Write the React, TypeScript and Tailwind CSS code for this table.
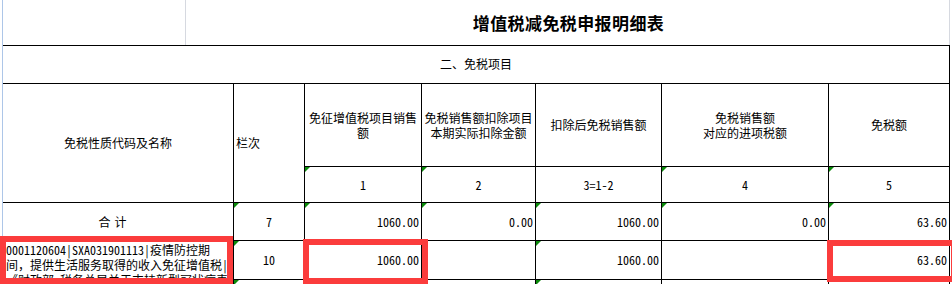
import React from "react";

const CJK = "font-['Noto_Sans_CJK_SC','Noto_Sans',sans-serif]";
const MONO = "font-['Noto_Sans_Mono_CJK_SC','Liberation_Mono','Noto_Sans_CJK_SC',monospace]";

// small green "number stored as text" marker in the cell corner
function Tick() {
  return (
    <span className="absolute left-0 top-0 h-0 w-0 border-t-[5px] border-r-[5px] border-t-[#0a8a0a] border-r-transparent" />
  );
}

function Cell({
  children,
  className = "",
  tick = false,
}: {
  children?: React.ReactNode;
  className?: string;
  tick?: boolean;
}) {
  return (
    <div className={`relative border-r border-b border-black ${className}`}>
      {tick && <Tick />}
      {children}
    </div>
  );
}

const num = `flex items-center justify-end pr-[2px] text-[12px] ${MONO}`;
const mid = `flex items-center justify-center text-[12px] ${MONO}`;

export default function App() {
  return (
    <div className="relative flex h-[284px] w-[952px] overflow-hidden bg-white text-black">
      <div className="w-[2px]" />
      <div className="w-px bg-[#adc6e8]" />

      <div className="w-[947px]">
        {/* title row */}
        <div className="flex h-[46px] border-b border-black">
          <div className="w-[183px] border-r border-[#d6d9e0]" />
          <div
            className={`flex flex-1 items-center justify-center border-r border-[#d6d9e0] pl-[2px] text-[17px] font-bold tracking-[0.4px] ${CJK}`}
          >
            增值税减免税申报明细表
          </div>
        </div>

        {/* section row */}
        <div
          className={`flex h-[38px] items-center justify-center border-r border-b border-black pb-[2px] text-[12px] ${CJK}`}
        >
          二、免税项目
        </div>

        <div className="grid grid-cols-[231px_71px_117px_114px_126px_167px_121px] grid-rows-[83px_36px_38px_39px_12px]">
          {/* header */}
          <Cell className={`row-span-2 flex items-center justify-center text-[12px] ${CJK}`}>
            免税性质代码及名称
          </Cell>
          <Cell className={`row-span-2 flex items-center pl-[2px] text-[12px] ${CJK}`}>栏次</Cell>
          <Cell className={`flex items-center justify-center text-center text-[12px] leading-[15px] ${CJK}`}>
            <span>
              免征增值税项目销售
              <br />额
            </span>
          </Cell>
          <Cell className={`flex items-center justify-center text-center text-[12px] leading-[15px] ${CJK}`}>
            <span>
              免税销售额扣除项目
              <br />
              本期实际扣除金额
            </span>
          </Cell>
          <Cell className={`flex items-center justify-center text-[12px] ${CJK}`}>扣除后免税销售额</Cell>
          <Cell className={`flex items-center justify-center text-center text-[12px] leading-[15px] ${CJK}`}>
            <span>
              免税销售额
              <br />
              对应的进项税额
            </span>
          </Cell>
          <Cell className={`flex items-center justify-center text-[12px] ${CJK}`}>免税额</Cell>

          {/* column numbers */}
          <Cell tick className={mid}>1</Cell>
          <Cell tick className={mid}>2</Cell>
          <Cell className={mid}>3=1-2</Cell>
          <Cell tick className={mid}>4</Cell>
          <Cell tick className={mid}>5</Cell>

          {/* total */}
          <Cell className={`flex items-center justify-center gap-[4px] pr-[11px] text-[12px] ${CJK}`}>
            <span>合</span>
            <span>计</span>
          </Cell>
          <Cell tick className={mid}>7</Cell>
          <Cell tick className={num}>1060.00</Cell>
          <Cell tick className={num}>0.00</Cell>
          <Cell tick className={num}>1060.00</Cell>
          <Cell tick className={num}>0.00</Cell>
          <Cell tick className={num}>63.60</Cell>

          {/* line 10 */}
          <Cell className={`overflow-hidden pl-[3px] pt-px text-[12px] leading-[15px] whitespace-nowrap ${MONO}`}>
            <div>0001120604|SXA031901113|疫情防控期</div>
            <div>间，提供生活服务取得的收入免征增值税|</div>
            <div>《财政部 税务总局关于支持新型冠状病毒感染</div>
          </Cell>
          <Cell tick className={mid}>10</Cell>
          <Cell tick className={num}>1060.00</Cell>
          <Cell className={num} />
          <Cell tick className={num}>1060.00</Cell>
          <Cell className={num} />
          <Cell className={num}>63.60</Cell>

          {/* next line, cut off */}
          <Cell />
          <Cell tick />
          <Cell />
          <Cell />
          <Cell tick />
          <Cell />
          <Cell />
        </div>
      </div>

      {/* red highlight boxes drawn over the sheet */}
      <div className="pointer-events-none absolute left-0 top-[236px] h-[48px] w-[233px] border-[6px] border-[#fb3c3c]" />
      <div className="pointer-events-none absolute left-[303px] top-[239px] h-[45px] w-[125px] border-[6px] border-[#fb3c3c]" />
      <div className="pointer-events-none absolute left-[827px] top-[240px] h-[42px] w-[130px] border-[6px] border-[#fb3c3c]" />
    </div>
  );
}
